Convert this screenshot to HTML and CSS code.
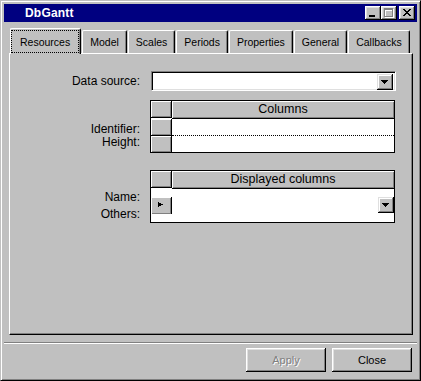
FILE: index.html
```html
<!DOCTYPE html>
<html lang="en">
<head>
    <meta charset="UTF-8">
    <title>DbGantt</title>
    <link rel="stylesheet" href="styles.css">
</head>
<body>
    <div class="window">
        <div class="titlebar">
            <span class="title">DbGantt</span>
            <div class="title-buttons">
                <button class="tbtn">
                    <svg width="16" height="14" viewBox="0 0 16 14"><path d="M4 9h6v2H4z" fill="#000"/></svg>
                </button>
                <button class="tbtn">
                    <svg width="16" height="14" viewBox="0 0 16 14">
                        <path d="M4 3h9v9H4zM5 5v6h7V5z" fill="#fff" fill-rule="evenodd"/>
                        <path d="M3 2h9v9H3zM4 4v6h7V4z" fill="#808080" fill-rule="evenodd"/>
                    </svg>
                </button>
                <button class="tbtn tbtn-close">
                    <svg width="16" height="14" viewBox="0 0 16 14"><path d="M4 3h2v1H4zM10 3h2v1h-2zM5 4h2v1H5zM9 4h2v1H9zM6 5h4v1H6zM7 6h2v1H7zM6 7h4v1H6zM5 8h2v1H5zM9 8h2v1H9zM4 9h2v1H4zM10 9h2v1h-2z" fill="#000"/></svg>
                </button>
            </div>
        </div>

        <div class="tabs">
            <div class="tab active"><span class="focus">Resources</span></div>
            <div class="tab">Model</div>
            <div class="tab">Scales</div>
            <div class="tab">Periods</div>
            <div class="tab">Properties</div>
            <div class="tab">General</div>
            <div class="tab">Callbacks</div>
        </div>

        <div class="panel">
            <div class="field">
                <label class="label">Data source:</label>
                <div class="combo">
                    <span class="drop-btn">
                        <svg width="16" height="16" viewBox="0 0 16 16"><path d="M4 6h7v1H4zM5 7h5v1H5zM6 8h3v1H6zM7 9h1v1H7z" fill="#000"/></svg>
                    </span>
                </div>
            </div>

            <div class="section columns">
                <div class="labels">
                    <div>Identifier:</div>
                    <div>Height:</div>
                </div>
                <div class="grid">
                    <div class="cell corner"></div>
                    <div class="cell head">Columns</div>
                    <div class="cell rowhead"></div>
                    <div class="cell data dotted"></div>
                    <div class="cell rowhead last"></div>
                    <div class="cell data last"></div>
                </div>
            </div>

            <div class="section displayed">
                <div class="labels">
                    <div>Name:</div>
                    <div>Others:</div>
                </div>
                <div class="grid">
                    <div class="cell corner"></div>
                    <div class="cell head">Displayed columns</div>
                    <div class="cell rowhead last">
                        <svg width="19" height="16" viewBox="0 0 19 16"><path d="M7 5h1v5H7zM8 6h2v3H8zM10 7h2v1h-2z" fill="#000"/></svg>
                    </div>
                    <div class="cell data last">
                        <span class="drop-btn">
                            <svg width="16" height="16" viewBox="0 0 16 16"><path d="M4 6h7v1H4zM5 7h5v1H5zM6 8h3v1H6zM7 9h1v1H7z" fill="#000"/></svg>
                        </span>
                    </div>
                </div>
            </div>
        </div>

        <div class="separator"></div>

        <div class="footer">
            <button class="btn" disabled>Apply</button>
            <button class="btn">Close</button>
        </div>
    </div>
</body>
</html>
```

FILE: styles.css
```css
* {
    margin: 0;
    padding: 0;
    box-sizing: border-box;
}

body {
    font-family: "Liberation Sans", Arial, sans-serif;
    font-size: 12px;
    color: #000;
    background: #c0c0c0;
}

svg {
    display: block;
    shape-rendering: crispEdges;
}

/* window frame */
.window {
    width: 421px;
    height: 381px;
    display: flex;
    flex-direction: column;
    padding: 3px;
    background: #c0c0c0;
    border: 1px solid;
    border-color: #c0c0c0 #000 #000 #c0c0c0;
    box-shadow: inset 1px 1px #fff, inset -1px -1px #808080;
}

.titlebar {
    height: 18px;
    display: flex;
    align-items: center;
    padding: 0 2px 0 21px;
    background: #000080;
    color: #fff;
    font-weight: bold;
    font-size: 12px;
    letter-spacing: 0.2px;
}

.title {
    flex: 1;
}

.title-buttons {
    display: flex;
}

.tbtn {
    width: 16px;
    height: 14px;
    border: none;
    background: #c0c0c0;
    box-shadow: inset -1px -1px #000, inset 1px 1px #fff, inset -2px -2px #808080, inset 2px 2px #dfdfdf;
}

.tbtn-close {
    margin-left: 2px;
}

/* tabs */
.tabs {
    height: 25px;
    margin-top: 6px;
    padding-left: 8px;
    display: flex;
    align-items: flex-end;
    gap: 1px;
}

.tab {
    height: 23px;
    display: flex;
    align-items: center;
    padding: 0 7px;
    font-size: 10.5px;
    background: #c0c0c0;
    border-top: 1px solid #fff;
    border-left: 1px solid #fff;
    border-right: 1px solid #000;
    border-radius: 2px 2px 0 0;
    box-shadow: inset -1px 0 #808080;
}

.tab.active {
    height: 26px;
    margin: 0 0 -1px -2px;
    padding: 1px 1px 1px 0;
    align-items: stretch;
    position: relative;
    z-index: 1;
}

.tab .focus {
    display: flex;
    align-items: center;
    padding: 0 8px;
    border: 1px dotted #000;
}

/* panel */
.panel {
    flex: 1;
    margin: 0 4px 0 5px;
    padding: 17px 0 0 0;
    border: 1px solid;
    border-color: #fff #000 #000 #fff;
    box-shadow: inset -1px -1px #808080;
}

.field {
    display: flex;
    align-items: center;
}

.label,
.labels {
    width: 130px;
    text-align: right;
}

.combo {
    width: 245px;
    height: 20px;
    margin-left: 11px;
    padding: 2px;
    display: flex;
    justify-content: flex-end;
    background: #fff;
    border: 1px solid;
    border-color: #808080 #fff #fff #808080;
    box-shadow: inset 1px 1px #000, inset -1px -1px #dfdfdf;
}

.drop-btn {
    width: 16px;
    height: 16px;
    background: #c0c0c0;
    box-shadow: inset -1px -1px #000, inset 1px 1px #dfdfdf, inset -2px -2px #808080, inset 2px 2px #fff;
}

.section {
    display: flex;
}

.section.columns {
    margin-top: 9px;
}

.section.columns .labels {
    padding-top: 23px;
    line-height: 13px;
}

.section.displayed {
    margin-top: 17px;
}

.section.displayed .labels {
    padding-top: 19px;
    line-height: 17px;
}

.grid {
    width: 245px;
    margin-left: 10px;
    display: grid;
    grid-template-columns: 21px 1fr;
    border: 1px solid #000;
    background: #fff;
}

.cell {
    height: 17px;
    border-bottom: 1px solid #000;
}

.corner,
.rowhead,
.head {
    background: #c0c0c0;
    box-shadow: inset 1px 1px #fff, inset -1px -1px #808080;
}

.corner,
.rowhead {
    border-right: 1px solid #000;
}

.head {
    height: 18px;
    text-align: center;
    font-size: 12.5px;
    line-height: 17px;
}

.data.dotted {
    border-bottom: 1px dotted #000;
}

.cell.last {
    border-bottom: none;
}

.columns .cell.last {
    height: 16px;
}

.data {
    display: flex;
    justify-content: flex-end;
}

/* bottom */
.separator {
    height: 2px;
    margin-top: 7px;
    border-top: 1px solid #808080;
    border-bottom: 1px solid #fff;
}

.footer {
    display: flex;
    justify-content: flex-end;
    gap: 6px;
    margin-top: 4px;
    padding: 0 5px 5px 0;
}

.btn {
    width: 80px;
    height: 24px;
    border: none;
    background: #c0c0c0;
    font-family: "Liberation Sans", Arial, sans-serif;
    font-size: 11px;
    color: #000;
    box-shadow: inset -1px -1px #000, inset 1px 1px #fff, inset -2px -2px #808080, inset 2px 2px #dfdfdf;
}

.btn:disabled {
    color: #808080;
    text-shadow: 1px 1px #fff;
}
```
